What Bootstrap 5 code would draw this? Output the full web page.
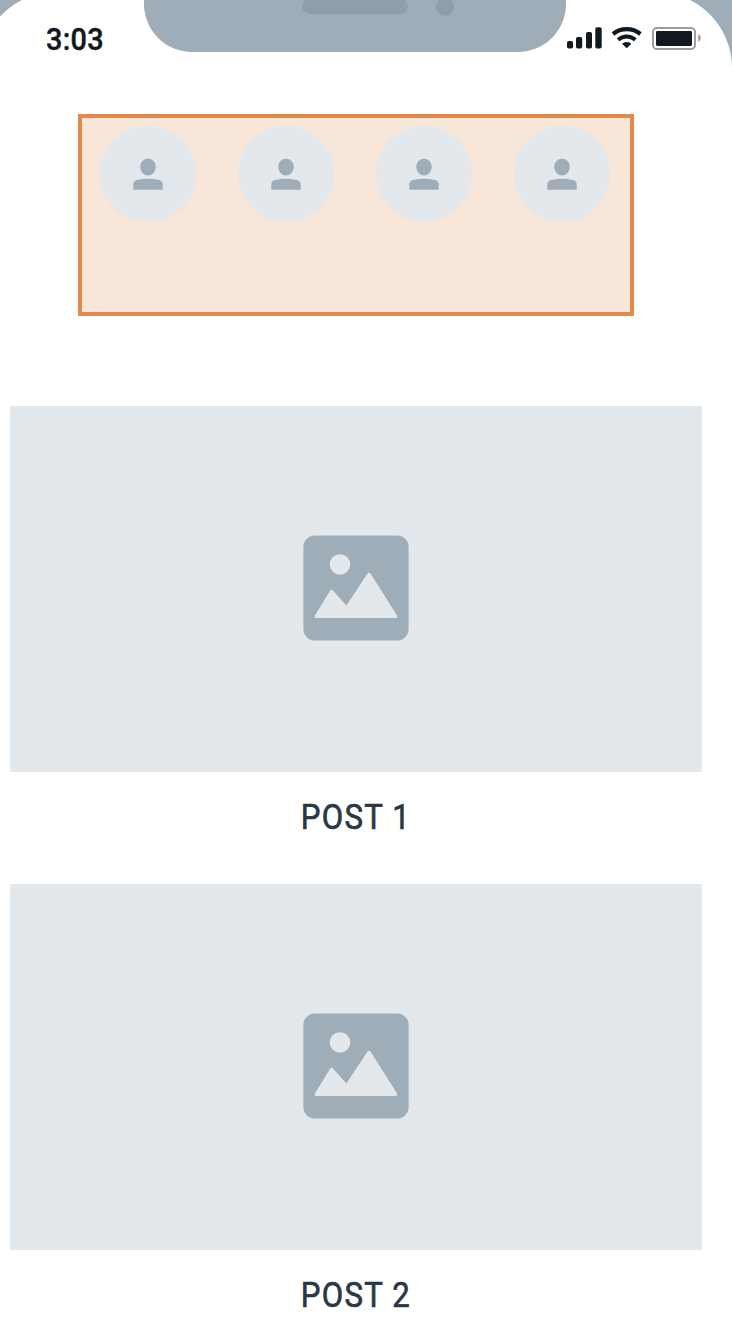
<!DOCTYPE html>
<html lang="en">
<head>
<meta charset="utf-8">
<meta name="viewport" content="width=device-width, initial-scale=1">
<title>Feed wireframe</title>
<link href="https://cdn.jsdelivr.net/npm/bootstrap@5.3.0/dist/css/bootstrap.min.css" rel="stylesheet">
<style>
  body { background: #fff; font-family: Roboto, "Liberation Sans", sans-serif; color: #2a3845; }
  .phone { width: 732px; height: 1328px; }
  .status-bar { height: 114px; }
  .bezel { z-index: 0; }
  .clock { margin: 19px 0 0 46px; font-size: 32px; line-height: 40px; font-weight: 500; color: #101820; z-index: 1; -webkit-text-stroke: .4px #101820; }
  .clock .word { transform: scaleX(.9); transform-origin: left; letter-spacing: .3px; }
  .indicators { margin: 24px 30px 0 0; z-index: 1; }
  .stories { width: 556px; height: 202px; margin-left: 78px; padding: 8px 20px 0 18px; border: 4px solid #e3894a; background: #f8e6d8; }
  .avatar { width: 96px; height: 96px; background: #e2e8eb; }
  .feed { margin: 90px 30px 0 10px; }
  .photo { height: 366px; padding-bottom: 2px; background: #e2e8eb; }
  .post-title { height: 112px; padding-top: 25px; font-size: 35px; line-height: 42px; font-weight: 400; -webkit-text-stroke: .7px #2a3845; }
  .word { display: inline-block; white-space: pre; }
  .post-title .word { transform: scaleX(.89); letter-spacing: 1.4px; }
</style>
</head>
<body>
<main class="phone position-relative overflow-hidden d-flex flex-column">
  <header class="status-bar position-relative d-flex justify-content-between align-items-start flex-shrink-0">
    <svg class="bezel position-absolute top-0 start-0" width="732" height="114" viewBox="0 0 732 114" aria-hidden="true">
      <path fill="#9fadb8" fill-rule="evenodd" d="M-30-20H732V68A76 76 0 0 0 656-8H56A76 76 0 0 0-20 68H-30Z"/>
      <path fill="#9fadb8" d="M144-10V4A48 48 0 0 0 192 52H518A48 48 0 0 0 566 4V-10Z"/>
      <rect x="302" y="-1" width="106" height="15" rx="7.5" fill="#909eab"/>
      <circle cx="445" cy="7" r="9" fill="#909eab"/>
    </svg>
    <div class="clock position-relative"><span class="word">3:03</span></div>
    <svg class="indicators position-relative" width="136" height="28" viewBox="566 24 136 28" role="img" aria-label="Signal, Wi-Fi, battery">
      <g fill="#101820">
        <rect x="567" y="41" width="6" height="7.5" rx="1.8"/>
        <rect x="576" y="37" width="6.2" height="11.5" rx="1.8"/>
        <rect x="586" y="32" width="6" height="16.5" rx="1.8"/>
        <rect x="595.3" y="27.3" width="6.4" height="21.2" rx="1.8"/>
        <path d="M626.7 48.3L622.6 44.2Q622.2 43.6 623 43.1Q626.7 40.9 630.4 43.1Q631.2 43.6 630.8 44.2Z"/>
      </g>
      <g fill="none" stroke="#101820">
        <path d="M613 34Q619 29.2 626.7 29.2T640.4 34" stroke-width="4.2"/>
        <path d="M618 39.8Q621.9 36.4 626.7 36.4T635.4 39.8" stroke-width="4"/>
      </g>
      <rect x="653" y="28" width="42" height="21" rx="3.8" fill="none" stroke="#9d9d9f" stroke-width="2"/>
      <rect x="656" y="31" width="36" height="15" rx="1.4" fill="#101820"/>
      <path d="M698.2 34Q700.8 35.2 700.8 38T698.2 42Z" fill="#9d9d9f"/>
    </svg>
  </header>

  <svg class="d-none">
    <symbol id="person" viewBox="0 0 30 32">
      <ellipse cx="15" cy="9" rx="7.8" ry="8.6"/>
      <path d="M.3 31.7V26.6Q.3 23 4.2 22.1Q15 19.3 25.8 22.1Q29.7 23 29.7 26.6V31.7Z"/>
    </symbol>
    <symbol id="picture" viewBox="0 0 106 106">
      <rect x=".4" y=".4" width="105.2" height="105.2" rx="11.5" fill="#9fadb8"/>
      <circle cx="37" cy="29.5" r="10.3" fill="#e2e8eb"/>
      <path fill="#e2e8eb" d="M13.2 83Q11.2 83 11.9 80.5L26.9 56Q28.6 53.7 30.4 56L43.4 70.5L64.2 39Q66 36.6 67.8 39L93.9 80.2Q94.9 83 92.2 83Z"/>
    </symbol>
  </svg>

  <section class="stories d-flex justify-content-between align-items-start flex-shrink-0">
    <div class="avatar rounded-circle d-flex align-items-center justify-content-center"><svg width="30" height="32" fill="#9fadb8"><use href="#person"/></svg></div>
    <div class="avatar rounded-circle d-flex align-items-center justify-content-center"><svg width="30" height="32" fill="#9fadb8"><use href="#person"/></svg></div>
    <div class="avatar rounded-circle d-flex align-items-center justify-content-center"><svg width="30" height="32" fill="#9fadb8"><use href="#person"/></svg></div>
    <div class="avatar rounded-circle d-flex align-items-center justify-content-center"><svg width="30" height="32" fill="#9fadb8"><use href="#person"/></svg></div>
  </section>

  <section class="feed">
    <article>
      <div class="photo d-flex align-items-center justify-content-center"><svg width="106" height="106"><use href="#picture"/></svg></div>
      <div class="post-title text-center"><span class="word">POST 1</span></div>
    </article>
    <article>
      <div class="photo d-flex align-items-center justify-content-center"><svg width="106" height="106"><use href="#picture"/></svg></div>
      <div class="post-title text-center"><span class="word">POST 2</span></div>
    </article>
  </section>
</main>
<script src="https://cdn.jsdelivr.net/npm/bootstrap@5.3.0/dist/js/bootstrap.bundle.min.js"></script>
</body>
</html>
